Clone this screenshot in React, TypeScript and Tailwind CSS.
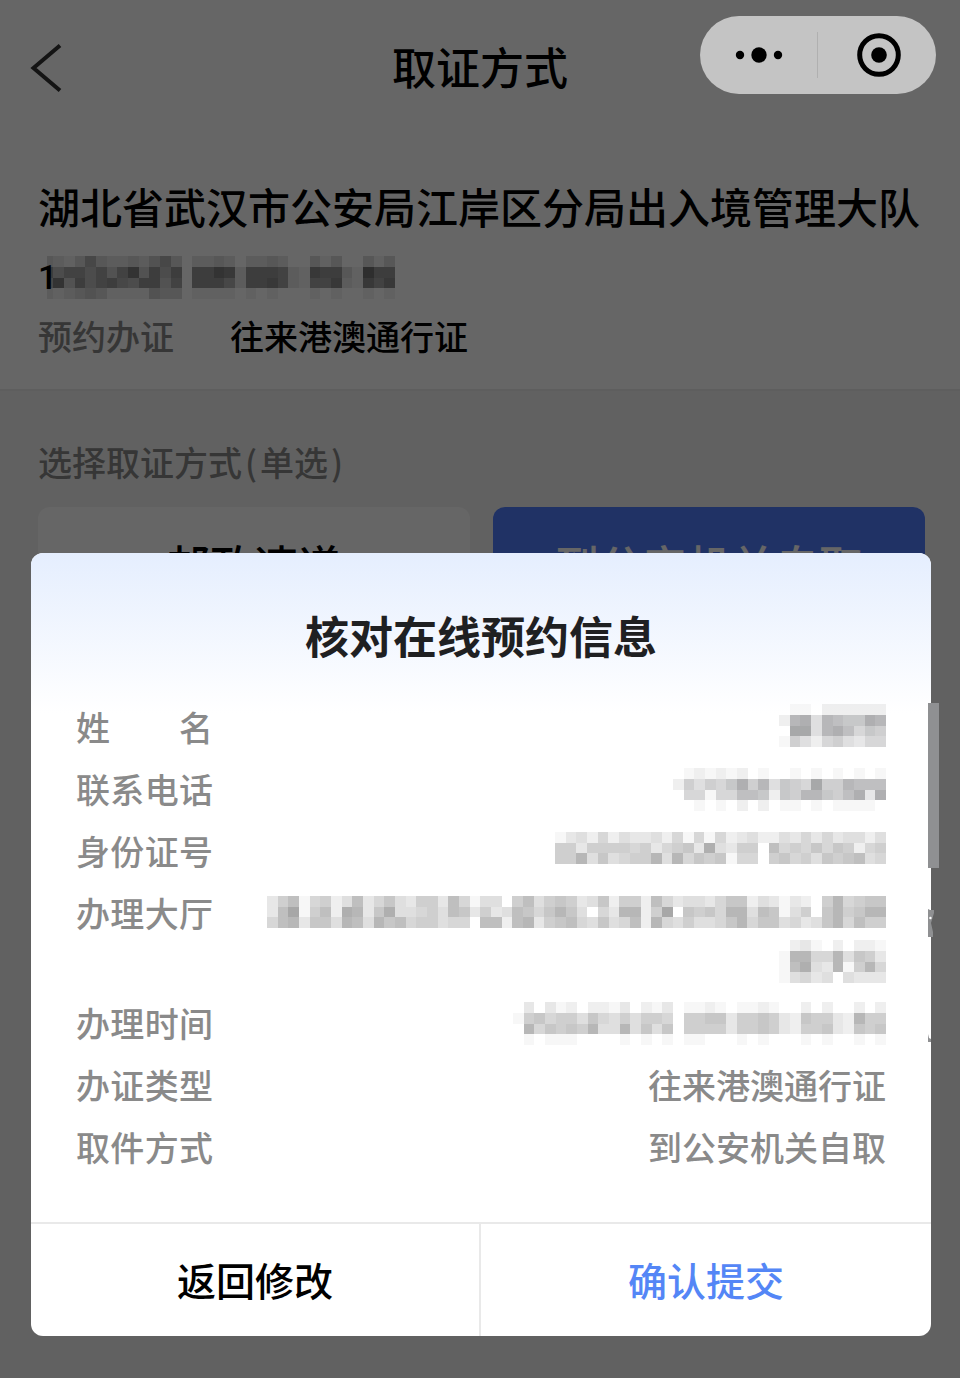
import { useState } from "react";

// Each character is one mosaic cell: 0 is empty, f is the darkest.
const MASKS = {
  date: [
    "321363223246302232022320031300313",
    "85775747a4858088a9288872198831b88",
    "6a4857865884708886288972177921979",
    "212343111143301111010100010100101",
  ],
  name: ["0110222222", "29a49877a9", "0bb49a8576", "1642564355"],
  phone: [
    "01212120100101010101",
    "264657a694765b669888",
    "05515588727699768a3a",
    "00101020201101011110",
  ],
  idCard: [
    "1342524334251515234224353534424",
    "66366665635673a4366085657576256",
    "6694745669495767155067564767845",
  ],
  hall: [
    "3681562483574366385144068467634726" + "628534435772431320695677",
    "38b1682a937a4456487363487579740539" + "926b07675994871460796799",
    "5893774984978566455088289367854745" + "829546445795774534795866",
  ],
  hallEnd: ["0231020221", "1995594763", "18a4391695", "1453404333"],
  time: [
    "03031202213021301121011210020200202",
    "16756647546466506677366763276632966",
    "09576769449474706666366763266732767",
    "01011100001010101100010100010100101",
  ],
};

function Mosaic({
  rows,
  label,
  className,
  skip = 0,
}: {
  rows: string[];
  label: string;
  className: string;
  skip?: number;
}) {
  return (
    <svg
      role="img"
      aria-label={label}
      className={`block shrink-0 ${className}`}
      viewBox={`${skip} 0 ${rows[0].length - skip} ${rows.length}`}
      preserveAspectRatio="none"
      shapeRendering="crispEdges"
      fill="currentColor"
    >
      {rows.map((row, y) =>
        row
          .split("")
          .map((cell, x) => (
            <rect
              key={`${x}-${y}`}
              x={x}
              y={y}
              width="1"
              height="1"
              fillOpacity={parseInt(cell, 16) * 0.05}
            />
          )),
      )}
    </svg>
  );
}

function Capsule() {
  return (
    <div className="absolute top-4 right-6 z-20 grid h-[78px] w-[236px] grid-cols-2 items-center rounded-full bg-[#c4c4c4]">
      <button
        type="button"
        aria-label="更多"
        className="flex h-[46px] items-center justify-center border-r border-[#b0b0b0]"
      >
        <svg className="h-5 w-12" viewBox="0 0 48 20" fill="#000">
          <circle cx="5" cy="10" r="4.2" />
          <circle cx="24" cy="10" r="7.7" />
          <circle cx="43" cy="10" r="4.2" />
        </svg>
      </button>
      <button
        type="button"
        aria-label="关闭"
        className="flex h-[46px] items-center justify-center pl-1"
      >
        <svg className="size-11" viewBox="0 0 44 44">
          <circle cx="22" cy="22" r="19.3" fill="none" stroke="#000" strokeWidth="5" />
          <circle cx="22" cy="22" r="7.8" fill="#000" />
        </svg>
      </button>
    </div>
  );
}

function Row({
  label,
  children,
}: {
  label: string;
  children: React.ReactNode;
}) {
  return (
    <div className="flex min-h-12 items-start justify-between">
      <dt className="w-[137px] shrink-0 [text-align-last:justify]">{label}</dt>
      <dd className="flex flex-col items-end text-right">{children}</dd>
    </div>
  );
}

function ConfirmDialog() {
  return (
    <div
      role="dialog"
      aria-labelledby="dialog-title"
      className="relative overflow-hidden rounded-xl bg-white"
    >
      <div className="bg-linear-to-b from-[#e5eefe] to-white to-[160px] px-[45px] pt-[51px] pb-[50px]">
        <h2
          id="dialog-title"
          className="text-center text-[44px] leading-[62px] font-bold text-[#1f2022]"
        >
          核对在线预约信息
        </h2>
        <dl className="mt-[38px] flex flex-col gap-3.5 text-[34px] leading-[45px] font-medium text-[#8a8a8a]">
          <Row label="姓名">
            <Mosaic
              rows={MASKS.name}
              label="姓名已隐藏"
              className="h-[43px] w-[107px] text-[#5f6063]"
            />
          </Row>
          <Row label="联系电话">
            <Mosaic
              rows={MASKS.phone}
              label="电话已隐藏"
              className="mt-0.5 h-[43px] w-[213px] text-[#5f6063]"
            />
          </Row>
          <Row label="身份证号">
            <Mosaic
              rows={MASKS.idCard}
              label="证号已隐藏"
              className="mt-1 h-8 w-[331px] text-[#5f5f5f]"
            />
          </Row>
          <Row label="办理大厅">
            <div className="flex flex-col items-end gap-3 pt-1.5 pb-[3px]">
              <Mosaic
                rows={MASKS.hall}
                label="大厅已隐藏"
                className="h-8 w-[619px] text-[#5f5f5f]"
              />
              <Mosaic
                rows={MASKS.hallEnd}
                label="大厅已隐藏"
                className="h-[43px] w-[107px] text-[#5f5f5f]"
              />
            </div>
          </Row>
          <Row label="办理时间">
            <Mosaic
              rows={MASKS.time}
              label="时间已隐藏"
              className="mt-0.5 h-[43px] w-[373px] text-[#5f5f5f]"
            />
          </Row>
          <Row label="办证类型">往来港澳通行证</Row>
          <Row label="取件方式">到公安机关自取</Row>
        </dl>
      </div>
      <div className="grid grid-cols-2 border-t-2 border-[#e9e9e9] text-[39px] font-medium">
        <button type="button" className="h-28 border-r-2 border-[#e9e9e9] pb-0.5 text-black">
          返回修改
        </button>
        <button type="button" className="h-28 pb-0.5 text-[#5486f6]">
          确认提交
        </button>
      </div>
    </div>
  );
}

const METHODS = ["邮政速递", "到公安机关自取"];

export default function App() {
  const [method, setMethod] = useState(METHODS[1]);

  return (
    <div className="relative min-h-screen bg-[#f3f3f3] font-['Noto_Sans_CJK_SC',sans-serif] text-black">
      <div className="border-b-2 border-[#ebebeb] bg-white pb-[30px]">
        <header className="relative flex h-[132px] items-center justify-center">
          <button type="button" aria-label="返回" className="absolute top-11 left-[30px]">
            <svg
              className="h-12 w-8"
              viewBox="0 0 32 48"
              fill="none"
              stroke="#333"
              strokeWidth="4"
            >
              <path d="M30 1.5 3.5 24 30 46.5" />
            </svg>
          </button>
          <h1 className="text-[44px] font-medium">取证方式</h1>
        </header>
        <section className="pt-11 pr-[35px] pl-[38px]">
          <h2 className="text-[42px] leading-[60px] font-medium whitespace-nowrap">
            湖北省武汉市公安局江岸区分局出入境管理大队
          </h2>
          <div className="mt-5 flex h-[43px] items-center text-[34px]">
            <span className="font-[Roboto] font-medium">1</span>
            <Mosaic
              rows={MASKS.date}
              label="日期已隐藏"
              skip={0.4}
              className="-ml-2.5 h-[43px] w-[348px] text-black"
            />
          </div>
          <div className="mt-3.5 flex gap-14 text-[34px] leading-[46px] font-medium">
            <span className="text-[#888]">预约办证</span>
            <span>往来港澳通行证</span>
          </div>
        </section>
      </div>

      <section className="pt-[47px] pr-[35px] pl-[38px]">
        <h3 className="text-[34px] leading-[48px] font-medium text-[#888]">
          选择取证方式<span className="px-[3px]">(</span>单选
          <span className="px-[3px]">)</span>
        </h3>
        <div className="mt-[21px] grid grid-cols-2 gap-[23px]">
          {METHODS.map((item) => (
            <button
              key={item}
              type="button"
              aria-pressed={method === item}
              onClick={() => setMethod(item)}
              className={`h-[114px] rounded-xl text-[44px] font-medium ${
                method === item ? "bg-[#527dfc] text-white" : "bg-white text-black"
              }`}
            >
              {item}
            </button>
          ))}
        </div>
      </section>

      <div className="absolute inset-0 z-10 flex flex-col justify-end bg-black/60 pr-[29px] pb-[42px] pl-[31px]">
        <ConfirmDialog />
        {/* page scroll thumb, with the bits of text it leaves beside the dialog */}
        <div className="absolute top-[703px] right-[21px] h-[165px] w-[11px] bg-[#8f9092]" />
        <svg
          className="absolute top-[909px] right-[26px] h-[134px] w-1.5"
          viewBox="0 0 6 134"
          fill="#8f9092"
        >
          <path d="M0 0v28h5v-5l-2-9 3-10V1H2zM0 125v8h3v-3l-2-1z" />
          <circle cx="2.4" cy="9" r="1.2" fill="#fff" />
        </svg>
      </div>
      <Capsule />
    </div>
  );
}
